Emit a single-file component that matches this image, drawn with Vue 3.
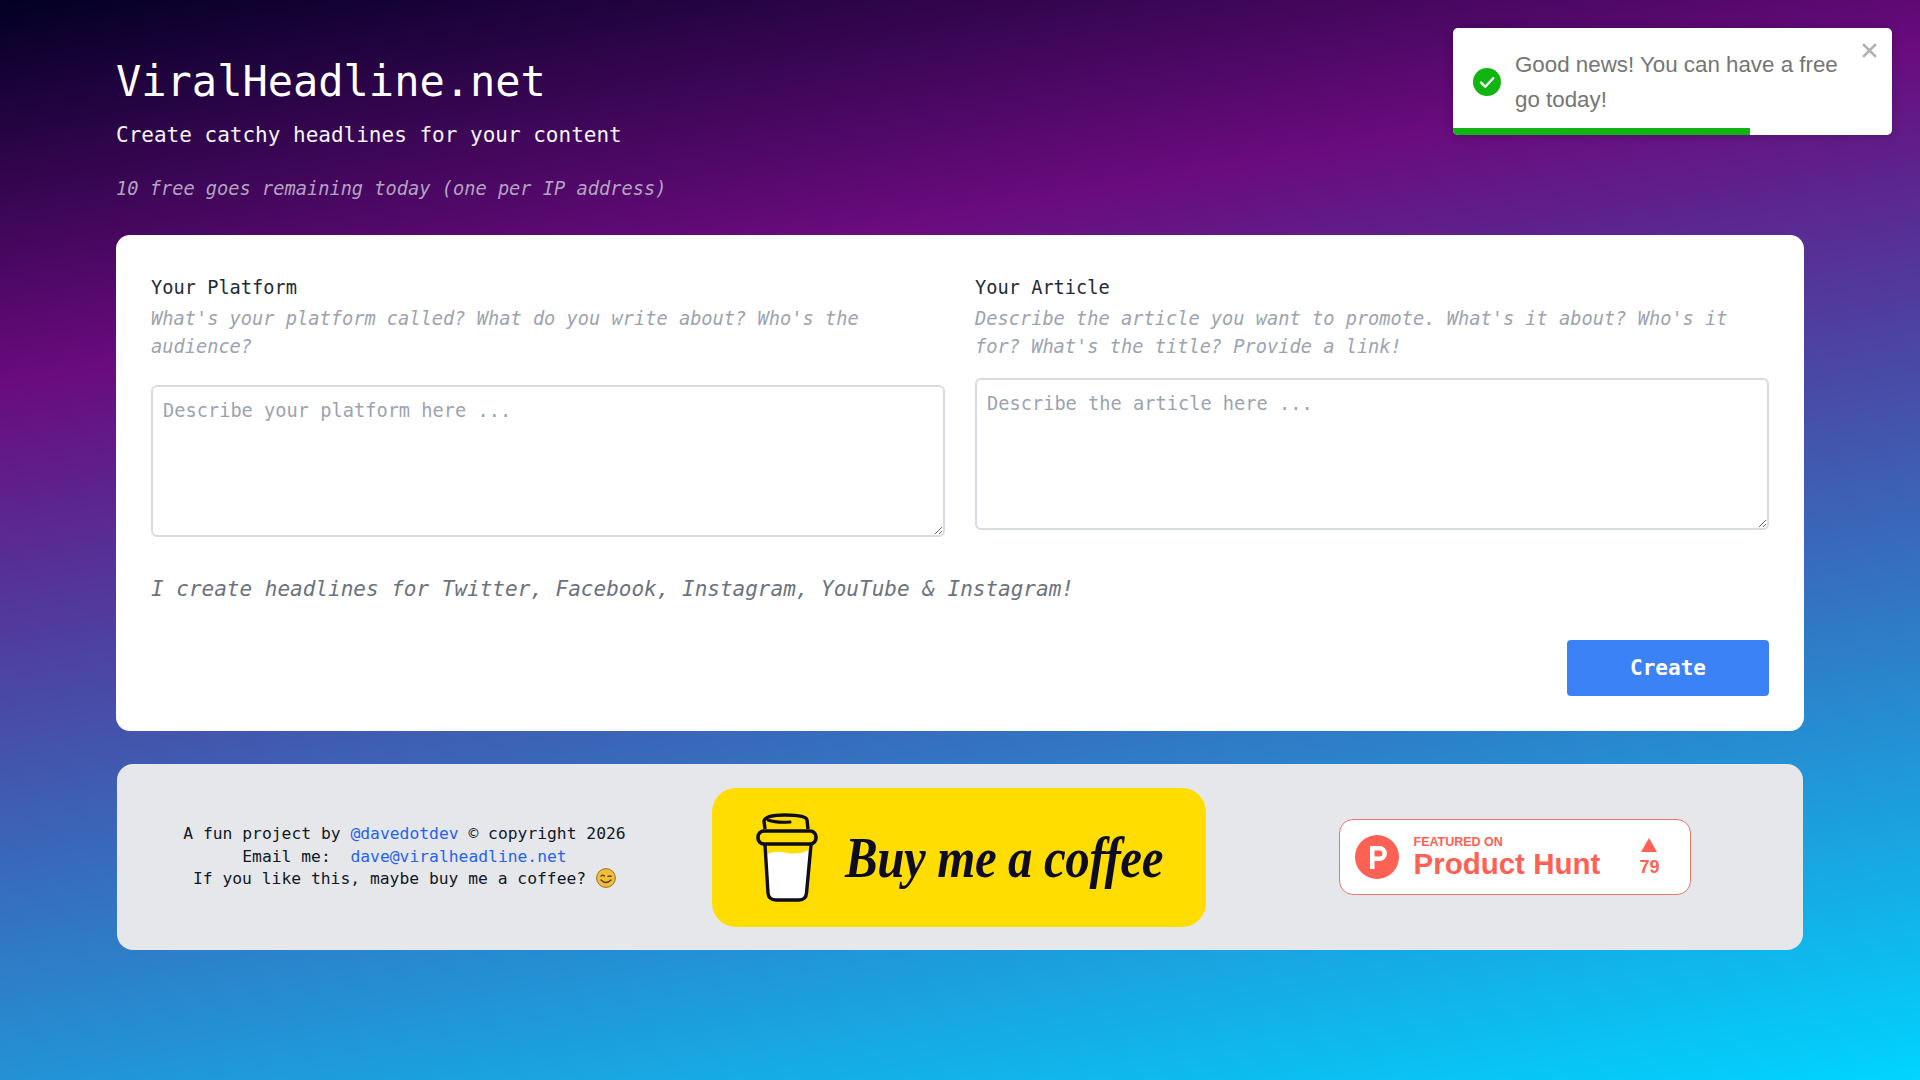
<template>
  <div class="page">
    <header class="head">
      <h1>ViralHeadline.net</h1>
      <p class="sub">Create catchy headlines for your content</p>
      <p class="goes">{{ freeGoes }} free goes remaining today (one per IP address)</p>
    </header>

    <main class="card">
      <div class="cols">
        <div class="col">
          <label class="lbl">Your Platform</label>
          <p class="hint hint-left">What's your platform called? What do you write about? Who's the audience?</p>
          <textarea v-model="platform" placeholder="Describe your platform here ..."></textarea>
        </div>
        <div class="col">
          <label class="lbl">Your Article</label>
          <p class="hint">Describe the article you want to promote. What's it about? Who's it for? What's the title? Provide a link!</p>
          <textarea v-model="article" placeholder="Describe the article here ..."></textarea>
        </div>
      </div>
      <p class="tagline">I create headlines for Twitter, Facebook, Instagram, YouTube &amp; Instagram!</p>
      <div class="actions">
        <button class="create">Create</button>
      </div>
    </main>

    <footer class="foot">
      <div class="credits">
        <div>A fun project by <a href="#">@davedotdev</a> © copyright 2026</div>
        <div>Email me: &nbsp;<a href="#">dave@viralheadline.net</a></div>
        <div>
          If you like this, maybe buy me a coffee?
          <svg class="wink" viewBox="0 0 20 20" width="20" height="20">
            <circle cx="10" cy="10" r="9.4" fill="#f5bd3c" stroke="#7a5a14" stroke-width="0.8" />
            <path d="M5 8q1.7-1.6 3.4 0" fill="none" stroke="#5b4210" stroke-width="1.3" stroke-linecap="round" />
            <path d="M12 8.2h3" fill="none" stroke="#5b4210" stroke-width="1.5" stroke-linecap="round" />
            <path d="M5 12q5 5 10 0" fill="none" stroke="#5b4210" stroke-width="1.5" stroke-linecap="round" />
          </svg>
        </div>
      </div>

      <a class="coffee" href="#">
        <svg class="cup" viewBox="0 0 62 90" width="62" height="90">
          <path d="M11 42q10-4 20-1q12 2 22-3l-3 43q-1 6-7 6h-24q-5 0-6-6z" fill="#fff" />
          <path d="M9 33l3 48q.5 7 8 7h23q7 0 7.500-7l4.500-48" fill="none" stroke="#0d0c22" stroke-width="3.400" stroke-linecap="round" />
          <rect x="2" y="19" width="58" height="13" rx="6" fill="none" stroke="#0d0c22" stroke-width="3.600" />
          <path d="M9 17l-1-8q1-6 21-6q21 0 22 5l1 9" fill="none" stroke="#0d0c22" stroke-width="3.400" />
          <path d="M12 8q8 3 22 2" fill="none" stroke="#0d0c22" stroke-width="3" stroke-linecap="round" />
        </svg>
        <span class="coffee-text">Buy me a coffee</span>
      </a>

      <a class="ph" href="#">
        <svg class="ph-logo" viewBox="0 0 44 44" width="44" height="44">
          <circle cx="22" cy="22" r="22" fill="#ff6154" />
          <path d="M15 11h9.500a7.500 7.500 0 0 1 0 15H19.500v8H15zM19.500 15.500v6h5a3 3 0 0 0 0-6z" fill="#fff" fill-rule="evenodd" />
        </svg>
        <div class="ph-text">
          <span class="ph-small">FEATURED ON</span>
          <span class="ph-big">Product Hunt</span>
        </div>
        <div class="ph-votes">
          <span class="ph-tri"></span>
          <span class="ph-num">{{ votes }}</span>
        </div>
      </a>
    </footer>

    <!-- toast -->
    <div class="toast">
      <svg class="toast-icon" viewBox="0 0 28 28" width="28" height="28">
        <circle cx="14" cy="14" r="14" fill="#11b511" />
        <path d="M8 14.500l4.200 4.200 8-8.500" fill="none" stroke="#fff" stroke-width="2.400" stroke-linecap="round" stroke-linejoin="round" />
      </svg>
      <div class="toast-msg">Good news! You can have a free go today!</div>
      <svg class="toast-close" viewBox="0 0 14 14" width="15" height="15">
        <path d="M1 1l12 12M13 1L1 13" stroke="#b0b0b0" stroke-width="2.400" />
      </svg>
      <div class="toast-bar" :style="{ width: progress + '%' }"></div>
    </div>
  </div>
</template>

<script setup>
import { ref } from 'vue';

const platform = ref('');
const article = ref('');
const freeGoes = ref(10);
const votes = ref(79);
const progress = ref(67.7);
</script>

<style>
html,
body {
  margin: 0;
  min-height: 100%;
}
body {
  min-height: 100vh;
  background: linear-gradient(170deg, #020024 0%, #6a0b7e 27%, #00d4ff 100%) no-repeat;
}
</style>

<style scoped>
.page {
  box-sizing: border-box;
  min-height: 1080px;
  padding: 59px 116px 0;
  font-family: "DejaVu Sans Mono", "Liberation Mono", monospace;
}

.head h1 {
  margin: 0;
  font-size: 42px;
  line-height: 46px;
  font-weight: 400;
  color: #fff;
}
.sub {
  margin: 16px 0 0;
  font-size: 21px;
  line-height: 28px;
  color: #f3f4f6;
}
.goes {
  margin: 27px 0 0;
  font-size: 18.670px;
  line-height: 26px;
  font-style: italic;
  color: #b3a3c0;
}

.card {
  margin-top: 33px;
  background: #fff;
  border-radius: 14px;
  padding: 39px 35px 35px;
  height: 496px;
  box-sizing: border-box;
}
.cols {
  display: grid;
  grid-template-columns: 1fr 1fr;
  gap: 30px;
}
.lbl {
  display: block;
  font-size: 18.670px;
  line-height: 28px;
  margin-bottom: 3px;
  color: #1f2937;
}
.hint {
  margin: 0 0 17px;
  font-size: 18.670px;
  line-height: 28px;
  font-style: italic;
  color: #9ca3af;
}
.hint-left {
  margin-bottom: 24px;
}
textarea {
  display: block;
  box-sizing: border-box;
  width: 100%;
  height: 152px;
  padding: 10px;
  border: 2px solid #d8dbe0;
  border-radius: 6px;
  outline: none;
  background: #fff;
  font-family: inherit;
  font-size: 18.670px;
  line-height: 28px;
  color: #1f2937;
}
textarea::placeholder {
  color: #9ca3af;
}
.tagline {
  margin: 37px 0 0;
  font-size: 21px;
  line-height: 30px;
  font-style: italic;
  color: #6b7280;
}
.actions {
  display: flex;
  justify-content: flex-end;
  margin-top: 36px;
}
.create {
  width: 202px;
  height: 56px;
  border: 0;
  border-radius: 4px;
  background: #3b82f6;
  color: #fff;
  font-family: inherit;
  font-size: 21px;
  font-weight: 700;
}

.foot {
  margin: 33px 1px 0;
  height: 186px;
  background: #e5e7eb;
  border-radius: 16px;
  display: grid;
  grid-template-columns: 595px 494px 1fr;
  align-items: center;
}
.credits {
  text-align: center;
  font-size: 16.330px;
  line-height: 22.700px;
  color: #111827;
  padding-right: 20px;
}
.credits a {
  color: #2563eb;
  text-decoration: none;
}
.wink {
  vertical-align: -4px;
}

.coffee {
  height: 139px;
  background: #ffdd00;
  border-radius: 24px;
  display: flex;
  align-items: center;
  padding-left: 44px;
  gap: 27px;
  text-decoration: none;
  overflow: hidden;
}
.cup {
  flex-shrink: 0;
}
.coffee-text {
  font-family: "Liberation Serif", serif;
  font-style: italic;
  font-weight: 700;
  font-size: 58px;
  letter-spacing: -0.5px;
  color: #0d0c22;
  white-space: nowrap;
  transform: scaleX(0.845);
  transform-origin: left center;
}

.ph {
  justify-self: center;
  box-sizing: border-box;
  width: 352px;
  height: 76px;
  margin-left: 20px;
  background: #fff;
  border: 1.500px solid #e8786c;
  border-radius: 14px;
  display: flex;
  align-items: center;
  padding: 0 30px 0 15px;
  gap: 15px;
  color: #ff6154;
  text-decoration: none;
  font-family: "Liberation Sans", Arial, sans-serif;
}
.ph-text {
  display: flex;
  flex-direction: column;
  flex: 1;
}
.ph-small {
  font-size: 12.500px;
  line-height: 14px;
  font-weight: 700;
}
.ph-big {
  font-size: 29.500px;
  line-height: 30px;
  font-weight: 700;
  white-space: nowrap;
}
.ph-votes {
  display: flex;
  flex-direction: column;
  align-items: center;
  gap: 6px;
}
.ph-tri {
  width: 0;
  height: 0;
  border-left: 8px solid transparent;
  border-right: 8px solid transparent;
  border-bottom: 14px solid #ff6154;
}
.ph-num {
  font-size: 18px;
  line-height: 18px;
  font-weight: 700;
}

/* overlay toast, top right */
.toast {
  position: absolute;
  top: 28px;
  left: 1453px;
  box-sizing: border-box;
  width: 439px;
  height: 107px;
  background: #fff;
  border-radius: 5px;
  box-shadow: 0 1px 10px rgba(0, 0, 0, 0.2);
  display: flex;
  align-items: center;
  gap: 14px;
  padding: 0 40px 0 20px;
  overflow: hidden;
  font-family: "Liberation Sans", Arial, sans-serif;
}
.toast-icon {
  flex-shrink: 0;
}
.toast-msg {
  font-size: 22.330px;
  line-height: 34.500px;
  color: #757575;
  margin-top: 2px;
}
.toast-close {
  position: absolute;
  top: 15px;
  right: 15px;
}
.toast-bar {
  position: absolute;
  left: 0;
  bottom: 0;
  height: 7px;
  background: #11b511;
}
</style>
